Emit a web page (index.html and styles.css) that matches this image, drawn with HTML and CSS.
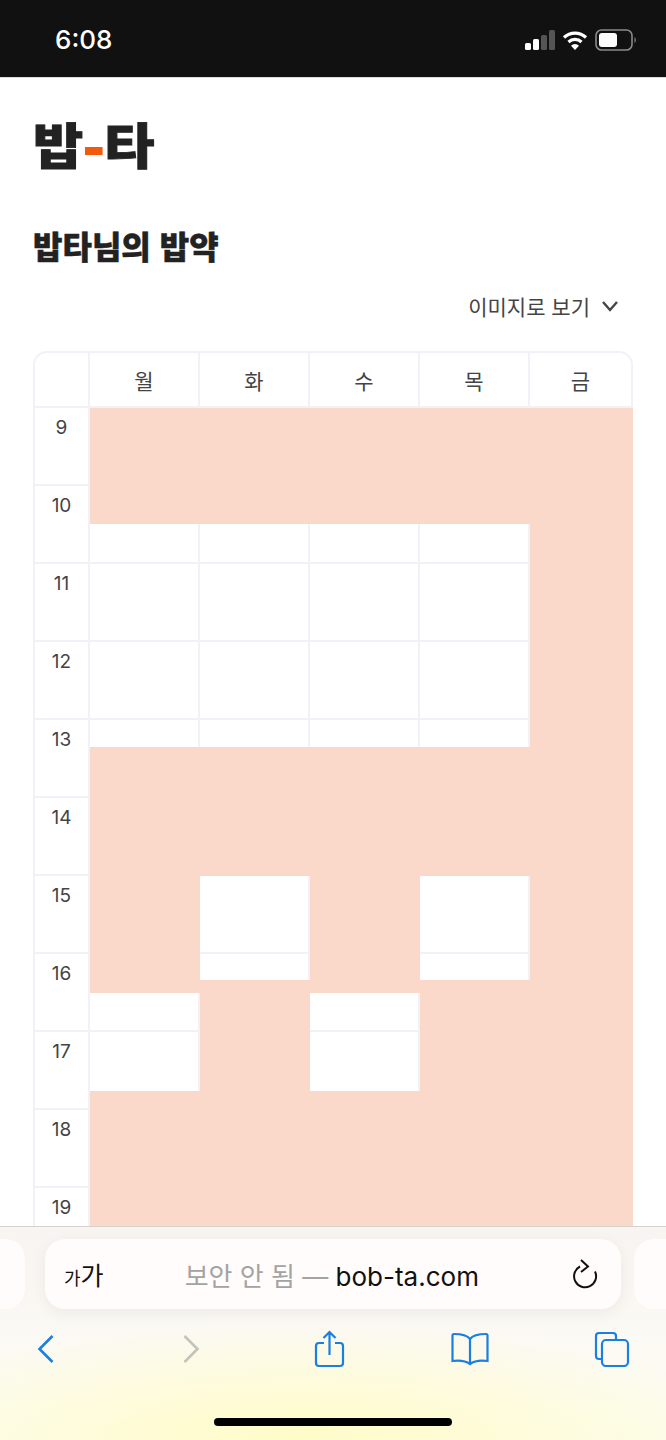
FILE: index.html
```html
<!DOCTYPE html>
<html lang="ko">
<head>
  <meta charset="UTF-8">
  <meta name="viewport" content="width=device-width, initial-scale=1.0">
  <title>밥-타</title>
  <link rel="stylesheet" href="styles.css">
</head>
<body>

<div class="phone">
  <div class="status-bar">
    <span class="clock">6:08</span>
    <div class="status-icons">
      <svg width="30" height="20" viewBox="0 0 30 20">
        <rect x="0" y="13" width="6" height="7" rx="1.5" fill="#fff"/>
        <rect x="8" y="9" width="6" height="11" rx="1.5" fill="#fff"/>
        <rect x="16" y="5" width="6" height="15" rx="1.5" fill="#555"/>
        <rect x="24" y="0" width="6" height="20" rx="1.5" fill="#555"/>
      </svg>
      <svg class="wifi" width="26" height="20" viewBox="0 0 26 20">
        <path d="M2 7.5a16 16 0 0 1 22 0" fill="none" stroke="#fff" stroke-width="3.2"/>
        <path d="M6.5 12a9.5 9.5 0 0 1 13 0" fill="none" stroke="#fff" stroke-width="3.2"/>
        <path d="M13 20l-4-4.300a5.500 5.500 0 0 1 8 0z" fill="#fff"/>
      </svg>
      <svg class="battery" width="42" height="22" viewBox="0 0 42 22">
        <rect x="1" y="1" width="36" height="20" rx="5.500" fill="none" stroke="#8a8a8a" stroke-width="1.600"/>
        <rect x="4" y="4" width="18" height="14" rx="3" fill="#fff"/>
        <path d="M39.500 8a4 4 0 0 1 0 6z" fill="#8a8a8a"/>
      </svg>
    </div>
  </div>

  <div class="content">
    <h1 class="logo">밥<span class="logo-dash">-</span>타</h1>
    <h2 class="title">밥타님의 밥약</h2>

    <div class="view-toggle">
      <span>이미지로 보기</span>
      <svg width="18" height="12" viewBox="0 0 18 12">
        <path d="M2 2l7 8 7-8" fill="none" stroke="#444" stroke-width="2.400"/>
      </svg>
    </div>

    <div class="timetable">
      <div class="cell head"></div>
      <div class="cell head">월</div>
      <div class="cell head">화</div>
      <div class="cell head">수</div>
      <div class="cell head">목</div>
      <div class="cell head">금</div>

      <div class="cell hour">9</div><div class="cell"></div><div class="cell"></div><div class="cell"></div><div class="cell"></div><div class="cell"></div>
      <div class="cell hour">10</div><div class="cell"></div><div class="cell"></div><div class="cell"></div><div class="cell"></div><div class="cell"></div>
      <div class="cell hour">11</div><div class="cell"></div><div class="cell"></div><div class="cell"></div><div class="cell"></div><div class="cell"></div>
      <div class="cell hour">12</div><div class="cell"></div><div class="cell"></div><div class="cell"></div><div class="cell"></div><div class="cell"></div>
      <div class="cell hour">13</div><div class="cell"></div><div class="cell"></div><div class="cell"></div><div class="cell"></div><div class="cell"></div>
      <div class="cell hour">14</div><div class="cell"></div><div class="cell"></div><div class="cell"></div><div class="cell"></div><div class="cell"></div>
      <div class="cell hour">15</div><div class="cell"></div><div class="cell"></div><div class="cell"></div><div class="cell"></div><div class="cell"></div>
      <div class="cell hour">16</div><div class="cell"></div><div class="cell"></div><div class="cell"></div><div class="cell"></div><div class="cell"></div>
      <div class="cell hour">17</div><div class="cell"></div><div class="cell"></div><div class="cell"></div><div class="cell"></div><div class="cell"></div>
      <div class="cell hour">18</div><div class="cell"></div><div class="cell"></div><div class="cell"></div><div class="cell"></div><div class="cell"></div>
      <div class="cell hour">19</div><div class="cell"></div><div class="cell"></div><div class="cell"></div><div class="cell"></div><div class="cell"></div>

      <!-- busy blocks sit over the grid -->
      <div class="block mon early"></div>
      <div class="block mon mid-long"></div>
      <div class="block mon late-short"></div>
      <div class="block tue early"></div>
      <div class="block tue mid-short"></div>
      <div class="block tue late-long"></div>
      <div class="block wed early"></div>
      <div class="block wed mid-long"></div>
      <div class="block wed late-short"></div>
      <div class="block thu early"></div>
      <div class="block thu mid-short"></div>
      <div class="block thu late-long"></div>
      <div class="block fri all-day"></div>
    </div>
  </div>

  <div class="safari">
    <div class="url-row">
      <div class="side-tab left-tab"></div>
      <div class="url-pill">
        <span class="text-size"><small>가</small>가</span>
        <span class="address"><span class="not-secure">보안 안 됨 — </span>bob-ta.com</span>
        <svg width="26" height="30" viewBox="0 0 26 30">
          <path d="M8 7.500a11 11 0 1 0 15 5" fill="none" stroke="#111" stroke-width="2"/>
          <path d="M9 1l7 6.500-7 5.500" fill="none" stroke="#111" stroke-width="2"/>
        </svg>
      </div>
      <div class="side-tab right-tab"></div>
    </div>

    <div class="toolbar">
      <svg width="18" height="30" viewBox="0 0 18 30">
        <path d="M15.500 2l-13 13 13 13" fill="none" stroke="#1a7fe0" stroke-width="2.600"/>
      </svg>
      <svg width="18" height="30" viewBox="0 0 18 30">
        <path d="M2.500 2l13 13-13 13" fill="none" stroke="#c4c2bc" stroke-width="2.600"/>
      </svg>
      <svg width="32" height="38" viewBox="0 0 32 38">
        <path d="M10 13H5a3 3 0 0 0-3 3v17a3 3 0 0 0 3 3h21a3 3 0 0 0 3-3V16a3 3 0 0 0-3-3h-5" fill="none" stroke="#1a7fe0" stroke-width="2.200"/>
        <path d="M15.500 25V2M9.500 8l6-6 6 6" fill="none" stroke="#1a7fe0" stroke-width="2.200"/>
      </svg>
      <svg width="38" height="34" viewBox="0 0 38 34">
        <path d="M19 7C16 3 11 2 3 2a1.500 1.500 0 0 0-1.500 1.500V29C10 28 15 29 19 32c4-3 9-4 17.500-3V3.500A1.500 1.500 0 0 0 35 2C27 2 22 3 19 7zV32" fill="none" stroke="#1a7fe0" stroke-width="2.200"/>
      </svg>
      <svg width="36" height="36" viewBox="0 0 36 36">
        <path d="M7 28H5a3 3 0 0 1-3-3V5a3 3 0 0 1 3-3h14a3 3 0 0 1 3 3v3" fill="none" stroke="#1a7fe0" stroke-width="2.200"/>
        <rect x="8" y="9" width="26" height="26" rx="4" fill="none" stroke="#1a7fe0" stroke-width="2.200"/>
      </svg>
    </div>

    <div class="home-bar"></div>
  </div>
</div>

</body>
</html>
```

FILE: styles.css
```css
* {
  box-sizing: border-box;
}

body {
  margin: 0;
  font-family: "Noto Sans CJK KR", "Noto Sans", sans-serif;
  background-color: white;
}

.phone {
  width: 666px;
  height: 1440px;
  display: flex;
  flex-direction: column;
  overflow: hidden;
}

.status-bar {
  height: 78px;
  flex-shrink: 0;
  background-color: #111;
  border-bottom: 1px solid #ddd;
  display: flex;
  justify-content: space-between;
  align-items: center;
  padding: 2px 29px 0 55px;
  color: white;
}

.clock {
  font-family: Inter, sans-serif;
  font-size: 26px;
  font-weight: 500;
}

.status-icons {
  display: flex;
  align-items: center;
  gap: 7px;
}

.content {
  flex: 1;
  min-height: 0;
  overflow: hidden;
  padding: 0 33px;
  color: #222;
}

.logo {
  margin: 28px 0 0;
  font-size: 52px;
  font-weight: 900;
  line-height: 76px;
  transform: scale(1.05, 0.93);
  transform-origin: left center;
  -webkit-text-stroke: 1px #222;
}

.logo-dash {
  font-size: 52px;
  line-height: 1px;
  vertical-align: -5px;
  color: #f2590d;
  -webkit-text-stroke: 2px #f2590d;
}

.title {
  margin: 41px 0 0;
  font-size: 32px;
  font-weight: 900;
  line-height: 44px;
  -webkit-text-stroke: 0.5px #222;
}

.view-toggle {
  margin-top: 23px;
  padding-right: 14px;
  display: flex;
  justify-content: flex-end;
  align-items: center;
  gap: 11px;
  font-size: 21px;
  line-height: 32px;
  color: #444;
}

.timetable {
  position: relative;
  margin-top: 29px;
  display: grid;
  grid-template-columns: 55px repeat(4, 110px) 1fr;
  grid-auto-rows: 78px;
  grid-template-rows: 55px;
  border: 2px solid #f1f1f7;
  border-bottom: none;
  border-radius: 14px 14px 0 0;
}

.cell {
  border-right: 2px solid #f1f1f7;
  border-bottom: 2px solid #f1f1f7;
}

.cell:nth-child(6n) {
  border-right: none;
}

.head {
  display: flex;
  justify-content: center;
  align-items: center;
  font-size: 21px;
  color: #444;
}

.hour {
  padding-top: 6px;
  text-align: center;
  font-family: Inter, sans-serif;
  font-size: 19px;
  line-height: 28px;
  color: #444;
}

.block {
  position: absolute;
  background-color: #fad8ca;
}

/* columns */
.mon { left: 55px; width: 110px; }
.tue { left: 165px; width: 110px; }
.wed { left: 275px; width: 110px; }
.thu { left: 385px; width: 110px; }
.fri { left: 495px; right: -2px; }

/* time ranges, measured from the top of the table */
.early { top: 55px; height: 116px; }
.mid-long { top: 394px; height: 246px; }
.mid-short { top: 394px; height: 129px; }
.late-short { top: 738px; height: 200px; }
.late-long { top: 627px; height: 311px; }
.all-day { top: 55px; height: 883px; }

.safari {
  height: 214px;
  flex-shrink: 0;
  border-top: 1px solid #d6d2ce;
  background:
    radial-gradient(ellipse 420px 120px at 45% 100%, #fffcc8, rgba(255, 252, 200, 0)),
    linear-gradient(#f8f4f1, #fbf9f4 50%, #fdfcea);
  display: flex;
  flex-direction: column;
}

.url-row {
  display: flex;
  margin-top: 12px;
}

.side-tab {
  height: 70px;
  background-color: #fffcfb;
}

.left-tab {
  width: 32px;
  margin-left: -7px;
  border-radius: 0 20px 20px 0;
}

.right-tab {
  width: 32px;
  border-radius: 20px 0 0 20px;
}

.url-pill {
  width: 576px;
  height: 70px;
  margin: 0 13px 0 20px;
  display: flex;
  align-items: center;
  padding: 0 23px 0 19px;
  background-color: #fffcfb;
  border-radius: 20px;
  box-shadow: 0 4px 16px rgba(0, 0, 0, 0.06);
}

.text-size {
  font-size: 25px;
  color: #111;
}

.text-size small {
  font-size: 18px;
}

.address {
  flex: 1;
  padding-right: 12px;
  text-align: center;
  font-family: Inter, "Noto Sans CJK KR", sans-serif;
  font-size: 26px;
  color: #111;
}

.not-secure {
  color: #a3a3a3;
}

.toolbar {
  display: flex;
  align-items: center;
  margin-top: 21px;
  padding-left: 37px;
}

.toolbar svg:nth-child(2) { margin-left: 127px; }
.toolbar svg:nth-child(3) { margin-left: 114px; }
.toolbar svg:nth-child(4) { margin-left: 105px; }
.toolbar svg:nth-child(5) { margin-left: 105px; }

.home-bar {
  width: 238px;
  height: 8px;
  margin: auto auto 14px;
  background-color: black;
  border-radius: 4px;
}
```
